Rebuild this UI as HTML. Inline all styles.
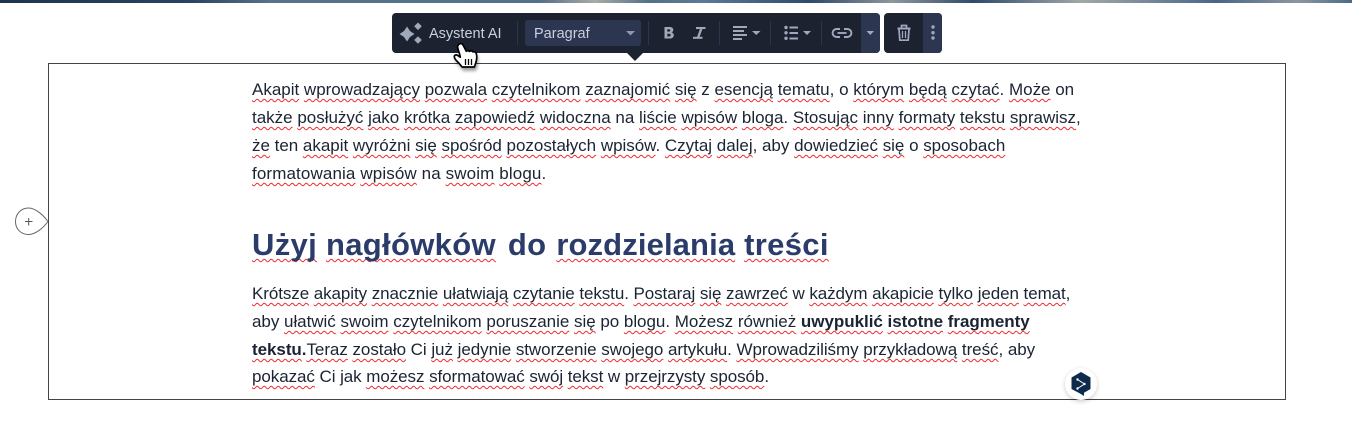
<!DOCTYPE html>
<html lang="pl">
<head>
<meta charset="utf-8">
<title>Edytor</title>
<style>
html,body{margin:0;padding:0;background:#fff;}
body{position:relative;width:1352px;height:437px;overflow:hidden;font-family:"Liberation Sans",sans-serif;}
.strip{position:absolute;left:0;top:0;width:1352px;height:3px;background:linear-gradient(90deg,#1d3550 0,#2a4360 14%,#56728c 20%,#557189 40%,#a9aba6 44%,#547088 48%,#5c7a96 52%,#2f4a6b 60%,#8e979b 66%,#2e4a6c 72%,#a2a8a8 80%,#48668a 90%,#8c979c 96%,#4a6a8a 100%);}
.box{position:absolute;left:48px;top:63px;width:1236px;height:335px;border:1px solid #444;}
.l{position:absolute;left:252px;white-space:nowrap;font-size:17px;line-height:28px;height:28px;color:#1b2433;}
.l u{text-decoration:underline wavy #ee2a2e 1.3px;text-underline-offset:3px;text-decoration-skip-ink:none;}
.h{position:absolute;left:252px;top:225px;white-space:nowrap;font-size:31px;line-height:40px;font-weight:700;color:#2b3c6b;letter-spacing:.32px;}
.h u{text-decoration:underline wavy #ee2a2e 1.3px;text-underline-offset:3px;text-decoration-skip-ink:none;}
.tb{position:absolute;top:13px;height:40px;background:#1c2230;border-radius:4px;overflow:hidden;}
.sep{position:absolute;top:21px;width:1px;height:24px;background:#2d3650;}
.t{position:absolute;color:#c9d0de;font-size:14.5px;line-height:20px;white-space:nowrap;}
svg{position:absolute;overflow:visible;}
</style>
</head>
<body>
<div class="strip"></div>
<div class="box"></div>

<div class="l" style="top:76px;letter-spacing:-.01px;"><u>Akapit</u> <u>wprowadzający</u> <u>pozwala</u> <u>czytelnikom</u> <u>zaznajomić</u> <u>się</u> z <u>esencją</u> <u>tematu</u>, o <u>którym</u> <u>będą</u> <u>czytać</u>. <u>Może</u> on</div>
<div class="l" style="top:104px;letter-spacing:-.01px;"><u>także</u> <u>posłużyć</u> <u>jako</u> <u>krótka</u> <u>zapowiedź</u> <u>widoczna</u> na <u>liście</u> <u>wpisów</u> <u>bloga</u>. <u>Stosując</u> <u>inny</u> <u>formaty</u> <u>tekstu</u> <u>sprawisz</u>,</div>
<div class="l" style="top:132px;letter-spacing:-.02px;"><u>że</u> ten <u>akapit</u> <u>wyróżni</u> <u>się</u> <u>spośród</u> <u>pozostałych</u> <u>wpisów</u>. <u>Czytaj</u> <u>dalej</u>, aby <u>dowiedzieć</u> <u>się</u> o <u>sposobach</u></div>
<div class="l" style="top:160px;letter-spacing:.12px;"><u>formatowania</u> <u>wpisów</u> na <u>swoim</u> <u>blogu</u>.</div>

<div class="h"><u>Użyj</u> <u>nagłówków</u> <span style="margin-left:3px;">do</span> <u style="margin-left:1px;letter-spacing:.12px;">rozdzielania</u> <u>treści</u></div>

<div class="l" style="top:280px;letter-spacing:-.08px;"><u>Krótsze</u> <u>akapity</u> <u>znacznie</u> <u>ułatwiają</u> <u>czytanie</u> <u>tekstu</u>. <u>Postaraj</u> <u>się</u> <u>zawrzeć</u> w <u>każdym</u> <u>akapicie</u> <u>tylko</u> <u>jeden</u> <u>temat</u>,</div>
<div class="l" style="top:308px;letter-spacing:-.03px;">aby <u>ułatwić</u> <u>swoim</u> <u>czytelnikom</u> <u>poruszanie</u> <u>się</u> po <u>blogu</u>. <u>Możesz</u> <u>również</u> <b><u>uwypuklić</u> <u>istotne</u> <u>fragmenty</u></b></div>
<div class="l" style="top:336px;letter-spacing:-.05px;"><b><u>tekstu</u>.</b><u>Teraz</u> <u>zostało</u> Ci <u>już</u> <u>jedynie</u> <u>stworzenie</u> <u>swojego</u> <u>artykułu</u>. <u>Wprowadziliśmy</u> <u>przykładową</u> <u>treść</u>, aby</div>
<div class="l" style="top:363px;letter-spacing:-.07px;"><u>pokazać</u> Ci jak <u>możesz</u> <u>sformatować</u> <u>swój</u> <u>tekst</u> w <u>przejrzysty</u> <u>sposób</u>.</div>

<!-- toolbar main -->
<div class="tb" style="left:392px;width:488px;"></div>
<div class="tb" style="left:884px;width:58px;"></div>
<div style="position:absolute;left:861px;top:13px;width:19px;height:40px;background:#2d3650;border-radius:0 4px 4px 0;"></div>
<div style="position:absolute;left:923px;top:13px;width:19px;height:40px;background:#2d3650;border-radius:0 4px 4px 0;"></div>
<div style="position:absolute;left:525px;top:20px;width:116px;height:26px;background:#2d3650;border-radius:3px;"></div>
<div class="sep" style="left:517px;"></div>
<div class="sep" style="left:648px;"></div>
<div class="sep" style="left:719px;"></div>
<div class="sep" style="left:770px;"></div>
<div class="sep" style="left:821px;"></div>

<svg style="left:0;top:0;" width="1352" height="437" viewBox="0 0 1352 437">
  <path d="M627 53h16l-8 8z" fill="#1c2230"/>
  <!-- sparkle -->
  <g fill="#a0a8bc">
    <path d="M407 26.500l3 4.500 4.500 3-4.500 3-3 4.500-3-4.500-4.500-3 4.500-3z"/>
    <path d="M418 22.500l3.800 3.800-3.800 3.800-3.800-3.800z"/>
    <path d="M418 36.200l3.800 3.800-3.800 3.800-3.800-3.800z"/>
  </g>
  <!-- select caret -->
  <path d="M626 31h9l-4.500 4.500z" fill="#8f97ab"/>
  <!-- bold -->
  <path fill-rule="evenodd" fill="#a0a8bc" d="M664.500 27h5c2.400 0 3.800 1.100 3.800 2.900 0 1.200-.7 2.100-1.800 2.500 1.400.3 2.300 1.300 2.300 2.800 0 2-1.600 3.300-4.100 3.300h-5.200zM667.300 29.200v2.400h1.500c1 0 1.500-.4 1.500-1.200 0-.8-.5-1.200-1.500-1.200zM667.300 33.700v2.800h1.800c1.100 0 1.600-.5 1.600-1.400 0-.9-.6-1.400-1.600-1.400z"/>
  <!-- italic -->
  <g fill="#a0a8bc">
    <path d="M696 27h9.500v2h-9.500z"/>
    <path d="M693 36.800h9.500v2h-9.500z"/>
    <path d="M700.300 28h2.500l-3.600 10h-2.500z"/>
  </g>
  <g fill="#a0a8bc">
    <!-- align -->
    <rect x="733" y="26" width="14" height="2"/>
    <rect x="733" y="30" width="11" height="2"/>
    <rect x="733" y="34" width="14" height="2"/>
    <rect x="733" y="38" width="9" height="2"/>
    <path d="M752 31h8.500l-4.250 4z"/>
    <!-- list -->
    <circle cx="786" cy="27.500" r="1.700"/>
    <circle cx="786" cy="32.800" r="1.700"/>
    <circle cx="786" cy="38.300" r="1.700"/>
    <rect x="789.500" y="26.500" width="8.500" height="2"/>
    <rect x="789.500" y="32" width="8.500" height="2"/>
    <rect x="789.500" y="37.500" width="8.500" height="2"/>
    <path d="M803 31h8l-4 4z"/>
    <!-- caret, more -->
    <path d="M866.500 31h7.500l-3.750 4z"/>
    <circle cx="933" cy="27" r="1.700"/>
    <circle cx="933" cy="32.700" r="1.700"/>
    <circle cx="933" cy="38" r="1.700"/>
  </g>
  <!-- link -->
  <g fill="none" stroke="#a0a8bc" stroke-width="1.900">
    <path d="M840 29h-3.400a4 4 0 0 0 0 8h3.400"/>
    <path d="M844 29h3.400a4 4 0 0 1 0 8H844"/>
    <path d="M837.500 33h9"/>
  </g>
  <!-- trash -->
  <g fill="none" stroke="#a0a8bc" stroke-width="1.700">
    <path d="M899 29.500l.8 10.700h8.400l.8-10.700"/>
    <path d="M897.500 28.500h13" stroke-width="2"/>
    <path d="M901.500 28v-2.500h5V28"/>
    <path d="M902.500 31v7M905.500 31v7" stroke-width="1.300"/>
  </g>

  <!-- add teardrop -->
  <path d="M48 221.500C44 216 36 208 28.500 208c-7.500 0-13 6-13 13.500s5.500 13 13 13C36 234.500 44 227 48 221.500z" fill="#fff" stroke="#666" stroke-width="1"/>
  <path d="M25 221.500h7.500M28.700 218v7.500" stroke="#555" stroke-width="1" fill="none"/>
  <path d="M48.500 205v34" stroke="#444" stroke-width="1"/>

  <!-- deepl -->
  <defs>
    <filter id="sh" x="-50%" y="-50%" width="200%" height="200%"><feGaussianBlur stdDeviation="2.500"/></filter>
    <filter id="sh2" x="-50%" y="-50%" width="200%" height="200%"><feGaussianBlur stdDeviation="1.500"/></filter>
  </defs>
  <circle cx="1081" cy="385.500" r="16" fill="#000" opacity=".2" filter="url(#sh)"/>
  <circle cx="1081" cy="384" r="16" fill="#fff"/>
  <path d="M1081 372l9.500 5.500v11.500l-6.500 3.800v3.200l-4-2.500-8.500-4.500v-11.500z" fill="#0f2b4b"/>
  <path d="M1077.500 379.500l7 4.500-7 4.500" fill="none" stroke="#fff" stroke-width="1"/>
  <circle cx="1077.500" cy="379.500" r="1.200" fill="#fff"/>
  <circle cx="1084.500" cy="384" r="1.200" fill="#fff"/>
  <circle cx="1077.500" cy="388.500" r="1.200" fill="#fff"/>

  <!-- hand cursor -->
  <path d="M461 45c2-1 3 0 4 2l2.500 5c1-1 2.500-1 3.500 0 1-.8 2.500-.8 3.500.3 1.500-.3 3 .5 3.500 2 .5 2 .3 6-.5 9-.5 2-1 3-1.500 4.500h-13c-1-2-3-4-5-6-1.500-1.500-2.500-3-2.500-4.500s1.500-2 3-1.500l3 2c-.5-4-2-7-2.500-9.500-.2-1.200.3-2 1.500-2.300z" fill="#000" opacity=".4" filter="url(#sh2)" transform="translate(0,3)"/>
  <path d="M459.500 44c1.700-1 3-.2 3.800 1.500l3 5.700c1-.7 2.300-.7 3.200.2 1-.8 2.500-.6 3.300.4 1.500-.5 3.200.3 3.600 2 .6 2.300.3 6-.6 9-.5 1.600-1 2.700-1.400 4.200h-12.400c-1.200-2-3-3.800-5-5.800-1.500-1.500-2.700-3.100-2.700-4.500 0-1.600 1.500-2.200 3-1.500l3 2c-.6-3.700-2.100-6.800-2.600-9.600-.2-1.500.2-2.900 1.800-3.600z" fill="#fff" stroke="#000" stroke-width="1.700" stroke-linejoin="round"/>
  <path d="M465.500 59v6M468.500 59v6M471.500 59v6" stroke="#000" stroke-width="1.300" fill="none"/>
</svg>

<div class="t" style="left:429px;top:24px;">Asystent AI</div>
<div class="t" style="left:534px;top:24px;">Paragraf</div>
</body>
</html>
